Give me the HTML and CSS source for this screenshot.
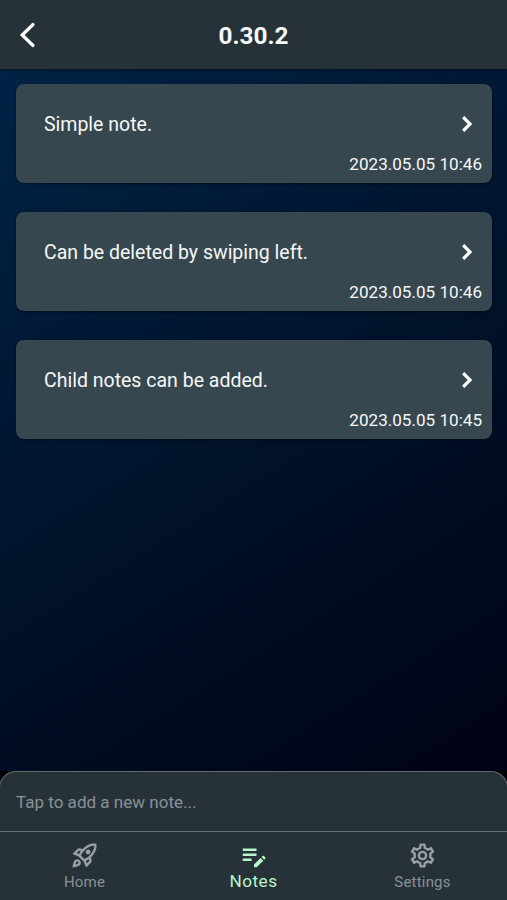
FILE: index.html
```
<!DOCTYPE html>
<html lang="en">
<head>
  <meta charset="UTF-8" />
  <meta name="viewport" content="width=device-width, initial-scale=1" />
  <title>0.30.2 - Notes</title>
  <link rel="stylesheet" href="styles.css">
</head>
<body>

<header>
  <a href="#" class="back" aria-label="Back">
    <svg viewBox="0 0 18 26"><path d="M14 2.5 3.2 13 14 23.5" /></svg>
  </a>
  <h1>0.30.2</h1>
</header>

<main>
  <article class="note">
    <div class="note-row">
      <p>Simple note.</p>
      <svg class="chevron" viewBox="0 0 12 18"><path d="M2.2 2.2 9 9l-6.8 6.8" /></svg>
    </div>
    <time>2023.05.05 10:46</time>
  </article>
  <article class="note">
    <div class="note-row">
      <p>Can be deleted by swiping left.</p>
      <svg class="chevron" viewBox="0 0 12 18"><path d="M2.2 2.2 9 9l-6.8 6.8" /></svg>
    </div>
    <time>2023.05.05 10:46</time>
  </article>
  <article class="note">
    <div class="note-row">
      <p>Child notes can be added.</p>
      <svg class="chevron" viewBox="0 0 12 18"><path d="M2.2 2.2 9 9l-6.8 6.8" /></svg>
    </div>
    <time>2023.05.05 10:45</time>
  </article>
</main>

<footer>
  <div class="new-note">Tap to add a new note...</div>
  <nav>
    <a href="#">
      <svg viewBox="0 0 24 24"><path d="M6 15c-.83 0-1.58.34-2.12.88C2.7 17.06 2 22 2 22s4.94-.7 6.12-1.88C8.66 19.58 9 18.83 9 18c0-1.66-1.34-3-3-3zm.71 3.71c-.28.28-2.17.76-2.17.76s.47-1.88.76-2.17c.17-.19.42-.3.7-.3.55 0 1 .45 1 1 0 .28-.11.53-.29.71zm10.71-5.06c6.36-6.36 4.24-11.31 4.24-11.31S16.71.22 10.35 6.58l-2.49-.5c-.65-.13-1.33.08-1.81.55L2 10.69l5 2.14L11.17 17l2.14 5 4.05-4.05c.47-.47.68-1.15.55-1.81l-.49-2.49zM7.41 10.83l-1.91-.82 1.97-1.97 1.44.29c-.57.83-1.08 1.7-1.5 2.5zm6.58 7.67-.82-1.91c.8-.42 1.67-.93 2.49-1.5l.29 1.44-1.96 1.97zM16 12.24c-1.32 1.32-3.38 2.4-4.04 2.73l-2.93-2.93c.32-.65 1.4-2.71 2.73-4.04 4.68-4.68 8.23-3.99 8.23-3.99s.69 3.55-3.99 8.23zM15 11c1.1 0 2-.9 2-2s-.9-2-2-2-2 .9-2 2 .9 2 2 2z" /></svg>
      <span>Home</span>
    </a>
    <a href="#" class="active">
      <svg viewBox="0 0 24 24"><path d="M3 10h11v2H3v-2zm0-2h11V6H3v2zm0 8h7v-2H3v2zm15.01-3.13.71-.71c.39-.39 1.02-.39 1.41 0l.71.71c.39.39.39 1.02 0 1.41l-.71.71-2.12-2.12zm-.71.71-5.3 5.3V21h2.12l5.3-5.3-2.12-2.12z" /></svg>
      <span>Notes</span>
    </a>
    <a href="#">
      <svg viewBox="0 0 24 24"><path d="M19.43 12.98c.04-.32.07-.64.07-.98 0-.34-.03-.66-.07-.98l2.11-1.65c.19-.15.24-.42.12-.64l-2-3.46c-.09-.16-.26-.25-.44-.25-.06 0-.12.01-.17.03l-2.49 1c-.52-.4-1.08-.73-1.69-.98l-.38-2.65C14.46 2.18 14.25 2 14 2h-4c-.25 0-.46.18-.49.42l-.38 2.65c-.61.25-1.17.59-1.69.98l-2.49-1c-.06-.02-.12-.03-.18-.03-.17 0-.34.09-.43.25l-2 3.46c-.13.22-.07.49.12.64l2.11 1.65c-.04.32-.07.65-.07.98 0 .33.03.66.07.98l-2.11 1.65c-.19.15-.24.42-.12.64l2 3.46c.09.16.26.25.44.25.06 0 .12-.01.17-.03l2.49-1c.52.4 1.08.73 1.69.98l.38 2.65c.03.24.24.42.49.42h4c.25 0 .46-.18.49-.42l.38-2.65c.61-.25 1.17-.59 1.69-.98l2.49 1c.06.02.12.03.18.03.17 0 .34-.09.43-.25l2-3.46c.12-.22.07-.49-.12-.64l-2.11-1.65zm-1.98-1.71c.04.31.05.52.05.73 0 .21-.02.43-.05.73l-.14 1.13.89.7 1.08.84-.7 1.21-1.27-.51-1.04-.42-.9.68c-.43.32-.84.56-1.25.73l-1.06.43-.16 1.13-.2 1.35h-1.4l-.19-1.35-.16-1.13-1.06-.43c-.43-.18-.83-.41-1.23-.71l-.91-.7-1.06.43-1.27.51-.7-1.21 1.08-.84.89-.7-.14-1.13c-.03-.31-.05-.54-.05-.74s.02-.43.05-.73l.14-1.13-.89-.7-1.08-.84.7-1.21 1.27.51 1.04.42.9-.68c.43-.32.84-.56 1.25-.73l1.06-.43.16-1.13.2-1.35h1.39l.19 1.35.16 1.13 1.06.43c.43.18.83.41 1.23.71l.91.7 1.06-.43 1.27-.51.7 1.21-1.07.85-.89.7.14 1.13zM12 8c-2.21 0-4 1.79-4 4s1.79 4 4 4 4-1.79 4-4-1.79-4-4-4zm0 6c-1.1 0-2-.9-2-2s.9-2 2-2 2 .9 2 2-.9 2-2 2z" /></svg>
      <span>Settings</span>
    </a>
  </nav>
</footer>

</body>
</html>
```
FILE: styles.css
```
* {
  box-sizing: border-box;
}

body {
  margin: 0;
  height: 100vh;
  display: flex;
  flex-direction: column;
  overflow: hidden;
  font-family: Roboto, sans-serif;
  background-color: #000;
  color: #f5f8f9;
}

header {
  height: 69px;
  flex: none;
  display: grid;
  grid-template-columns: 60px 1fr 60px;
  align-items: center;
  padding-top: 2px;
  background-color: #263238;
  box-shadow: 0 1px 4px rgba(0, 0, 0, 0.5);
  z-index: 1;
}

header h1 {
  margin: 0;
  font-size: 24.4px;
  line-height: 28px;
  font-weight: 700;
  text-align: center;
}

.back {
  display: block;
  width: 18px;
  height: 26px;
  margin-left: 19px;
  margin-top: -2px;
}

.back svg,
.chevron {
  display: block;
  fill: none;
  stroke: #fff;
  stroke-width: 3.2;
}

.back svg {
  stroke-linecap: round;
}

main {
  flex: 1;
  display: flex;
  flex-direction: column;
  gap: 29.5px;
  padding: 15px 15px 0 16px;
  background: linear-gradient(148deg, #002346 0%, #001128 55%, #000a20 77%, #000212 100%);
}

.note {
  height: 98.7px;
  padding: 27.5px 10px 0 28px;
  border-radius: 8px;
  background-color: #37474f;
  box-shadow: 0 1px 3px rgba(0, 0, 0, 0.5);
}

.note-row {
  display: flex;
  justify-content: space-between;
  align-items: center;
  padding-right: 9px;
}

.note p {
  margin: 0;
  font-size: 19.5px;
  line-height: 26px;
}

.chevron {
  width: 12px;
  height: 18px;
  margin-top: -2px;
}

.note time {
  display: block;
  margin-top: 16px;
  font-size: 17.1px;
  line-height: 20px;
  text-align: right;
}

footer {
  height: 129px;
  flex: none;
}

.new-note {
  height: 60px;
  margin: 0 -1px;
  padding: 0 16px;
  border: 1px solid #5f696e;
  border-bottom: none;
  border-radius: 17px 17px 0 0;
  background-color: #263238;
  color: #899196;
  font-size: 17.05px;
  line-height: 60px;
}

nav {
  height: 69px;
  display: grid;
  grid-template-columns: repeat(3, 1fr);
  border-top: 1px solid #677176;
  background-color: #263238;
}

nav a {
  display: flex;
  flex-direction: column;
  align-items: center;
  padding-top: 9px;
  color: #899196;
  font-size: 15px;
  line-height: 18px;
  letter-spacing: 0.2px;
  text-decoration: none;
}

nav svg {
  width: 29px;
  height: 29px;
  margin-bottom: 3px;
  fill: #999fa2;
}

nav .active {
  color: #b9f6ca;
  font-size: 17.2px;
  letter-spacing: 0.5px;
}

nav .active svg {
  width: 30px;
  height: 30px;
  margin-bottom: 1px;
  fill: #b9f6ca;
}
```
